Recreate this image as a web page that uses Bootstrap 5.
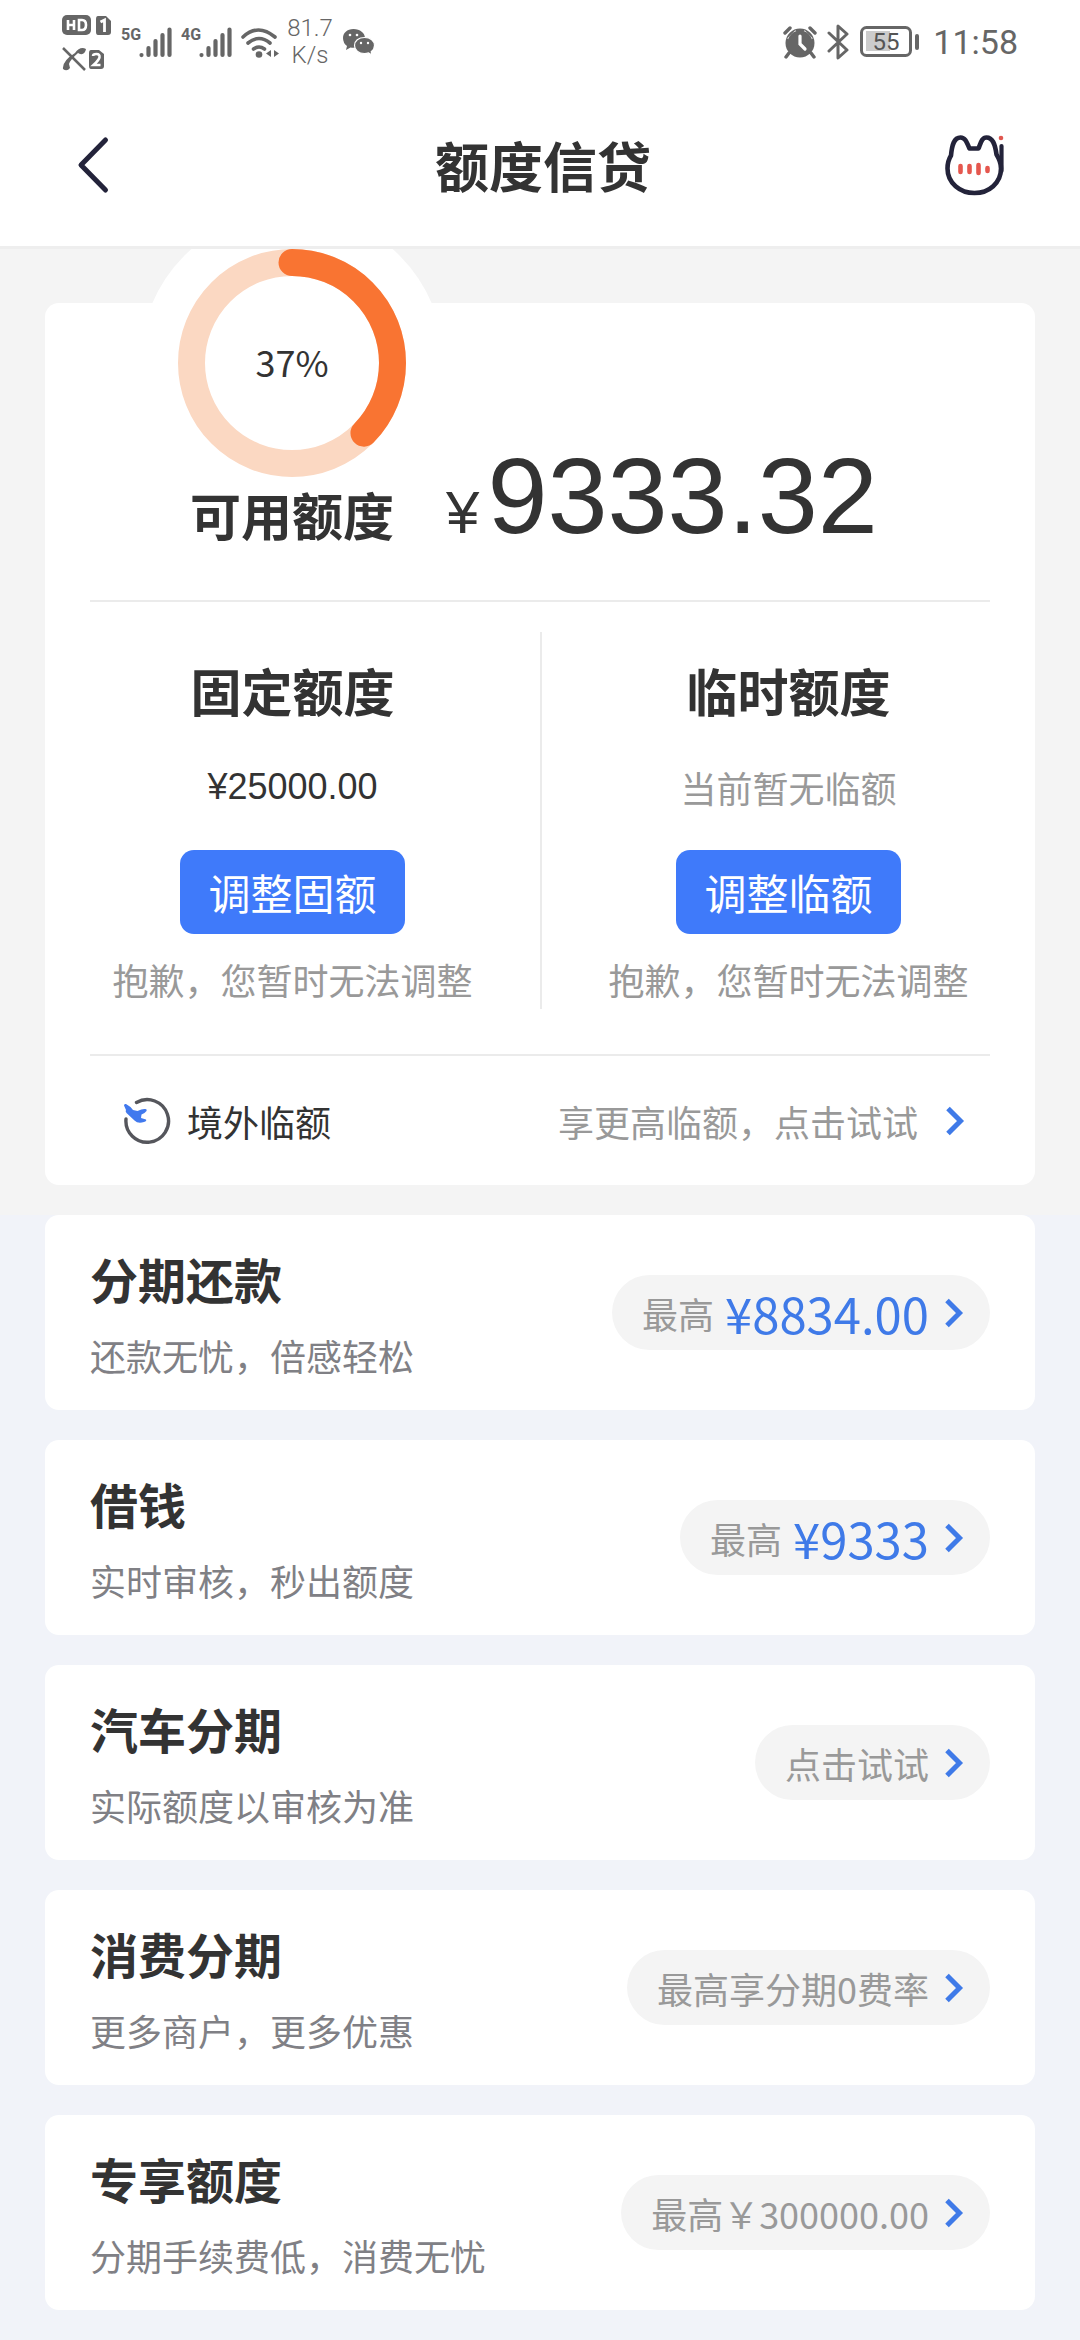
<!DOCTYPE html>
<html lang="zh-CN">
<head>
<meta charset="utf-8">
<meta name="viewport" content="width=device-width, initial-scale=1">
<title>额度信贷</title>
<link href="https://cdn.jsdelivr.net/npm/bootstrap@5.3.0/dist/css/bootstrap.min.css" rel="stylesheet">
<style>
  body { font-family: "Noto Sans CJK SC", sans-serif; font-size: 36px; line-height: 54px; color: #333; background: #f1f3f9; }
  a { color: inherit; text-decoration: none; }
  svg { display: block; flex: none; }

  .status-bar { height: 80px; padding: 3px 62px 0 61px; color: #666; font-family: Roboto, sans-serif; }
  .net-speed { width: 48px; margin-left: 6px; font-size: 24px; line-height: 27px; font-weight: 300; text-align: center; }
  .clock { margin-left: 12px; font-size: 34px; line-height: 42px; }

  .app-header { height: 169px; padding: 4px 70px 0 76px; border-bottom: 3px solid #eee; }
  .app-header h1 { font-size: 54px; line-height: 60px; font-weight: 700; }
  .icon-btn { width: 66px; height: 66px; border: 0; padding: 0; background: none; }

  .hero { background: #f4f4f4; padding: 54px 45px 30px; overflow: hidden; }
  .panel { background: #fff; border-radius: 14px; }
  .available { padding: 0 0 56px 133px; gap: 40px; }
  .ring-block { margin-top: -54px; }
  .ring { width: 228px; height: 228px; border-radius: 50%; background: #fff; box-shadow: 0 0 0 38px #fff; margin-bottom: 7px; position: relative; }
  .ring span { position: absolute; inset: 0; line-height: 224px; text-align: center; }
  .limit-title { position: relative; font-size: 51px; line-height: 60px; font-weight: 700; margin: 0; }
  .amount { font-family: "Liberation Sans", sans-serif; font-size: 108px; line-height: 96px; white-space: nowrap; }
  .amount small { font-size: 60px; line-height: 60px; margin-right: 8px; }
  .rule { height: 2px; margin: 0 45px; background: #ebebeb; }

  .limits { margin: 30px 0 45px; }
  .limit-col { padding-top: 28px; padding-bottom: 3px; }
  .limit-col + .limit-col { border-left: 2px solid #ebebeb; }
  .limit-value { margin-top: 40px; }
  .latin { font-family: "Liberation Sans", sans-serif; }
  .muted { color: #999; }
  .btn-adjust { --bs-btn-color: #fff; --bs-btn-bg: #3f7afa; --bs-btn-hover-color: #fff; --bs-btn-hover-bg: #3069e6; --bs-btn-active-color: #fff; --bs-btn-active-bg: #3069e6;
    width: 225px; height: 84px; margin: 36px 0 18px; padding: 0; border: 0; border-radius: 14px; font-size: 42px; line-height: 84px; }
  .abroad { height: 129px; padding: 0 70px 0 78px; }
  .abroad-name { gap: 16px; }
  .abroad-more { gap: 27px; }

  .products { padding: 0 45px 30px; gap: 30px; }
  .product { padding: 28px 45px; }
  .product h2 { font-size: 48px; line-height: 60px; font-weight: 700; margin: 5px 0 20px; }
  .product p { margin: 0; color: #808085; }
  .pill { height: 75px; padding: 0 26px 0 30px; gap: 15px; background: #f4f4f4; color: #999; white-space: nowrap; }
  .pill-sum { font-size: 49px; color: #3f7ae8; margin-left: -4px; }
</style>
</head>
<body>
<svg width="0" height="0" class="position-absolute" aria-hidden="true">
  <symbol id="chev" viewBox="0 0 20 30"><path d="M3 2.500 15.500 15 3 27.500" fill="none" stroke="#3f7ae8" stroke-width="5"/></symbol>
  <symbol id="bars" viewBox="0 0 33 31"><path d="M2.500 28v.1M9.500 21v7M16.500 14v14M23.500 8v20M30.500 2.500V28" fill="none" stroke="#666" stroke-width="4.200" stroke-linecap="round"/></symbol>
</svg>

<header class="bg-white">
  <div class="status-bar d-flex align-items-center justify-content-between">
    <div class="d-flex align-items-center">
      <svg width="51" height="58" viewBox="0 0 51 58" fill="#666">
        <rect x="1" y="2" width="29" height="20" rx="5"/>
        <path d="M7 7v10M13 7v10M7 12h6M18 7v10h3q4 0 4-5t-4-5z" fill="none" stroke="#fff" stroke-width="2.600"/>
        <path d="M37 3h8l5 5v11q0 3-3 3H37q-2 0-2-3V6q0-3 2-3z"/>
        <path d="M39.500 9l4-2v12" fill="none" stroke="#fff" stroke-width="2.800"/>
        <path d="M2 35 24 57" stroke="#666" stroke-width="2.500"/>
        <path d="M14 40q5-7 11-4-1 6-6 5l-2-1Q9 47 8 51l1 4q-3 4-7 1Q1 48 14 40z"/>
        <path d="M30 37h8l5 4v12q0 3-3 3H30q-2 0-2-3V40q0-3 2-3z"/>
        <path d="M32 43q0-2 3.500-2t3 3.500q-1 3-6 7.500h7" fill="none" stroke="#fff" stroke-width="2.500"/>
      </svg>
      <svg class="ms-2" width="52" height="34" viewBox="0 0 52 34"><text x="1" y="15" font-family="Roboto" font-weight="700" font-size="16" fill="#666">5G</text><use href="#bars" x="19" y="2" width="33" height="31"/></svg>
      <svg class="ms-2" width="52" height="34" viewBox="0 0 52 34"><text x="1" y="15" font-family="Roboto" font-weight="700" font-size="16" fill="#666">4G</text><use href="#bars" x="19" y="2" width="33" height="31"/></svg>
      <svg class="ms-2" width="40" height="34" viewBox="0 0 40 34">
        <path d="M3 12q15-14 32 0M8 18q11-9 22 0M13.500 24q5.500-4 11 0" fill="none" stroke="#666" stroke-width="3.600" stroke-linecap="round"/>
        <circle cx="19" cy="29.500" r="3.300" fill="#666"/><path d="M31 25v7l-5-3.500zM34 25v7l5-3.500z" fill="#666"/>
      </svg>
      <div class="net-speed">81.7 K/s</div>
      <svg class="ms-2" width="34" height="28" viewBox="0 0 34 28">
        <path d="M11.500 1C5 1 1 5 1 10q0 5 4 8l-1 4 4.500-2.500q6 1 10-2T23 10C23 5 18 1 11.500 1z" fill="#666"/>
        <path d="M22.500 9.500c-6 0-10 3.500-10 8s4 8 10 8q2 0 4-.6l3.500 2-.8-3.200q3.300-2.500 3.300-6.200c0-4.500-4-8-10-8z" fill="#666" stroke="#fff" stroke-width="1.200"/>
        <g fill="#fff"><circle cx="8" cy="7" r="1.300"/><circle cx="15" cy="7" r="1.300"/><circle cx="19" cy="15" r="1.200"/><circle cx="26" cy="15" r="1.200"/></g>
      </svg>
    </div>
    <div class="d-flex align-items-center">
      <svg width="34" height="34" viewBox="0 0 34 34">
        <circle cx="17" cy="18" r="14.500" fill="#666"/>
        <path d="M5 14 13 6M29 14 21 6" stroke="#fff" stroke-width="2"/>
        <path d="M2 8l5-5M32 8l-5-5M6 28l-3 4M28 28l3 4" stroke="#666" stroke-width="3.400" stroke-linecap="round"/>
        <circle cx="17" cy="18" r="12.500" fill="#666"/>
        <path d="M17 11v8l5 5" fill="none" stroke="#fff" stroke-width="3.200" stroke-linecap="round"/>
      </svg>
      <svg class="ms-2" width="26" height="36" viewBox="0 0 26 36"><path d="M4 9l18 17-9 8V2l9 8L4 27" fill="none" stroke="#666" stroke-width="3" stroke-linejoin="round" stroke-linecap="round"/></svg>
      <svg class="ms-2" width="62" height="34" viewBox="0 0 62 34">
        <rect x="7" y="6" width="24" height="20" fill="#ccc"/>
        <rect x="2.500" y="2.500" width="49" height="28" rx="5" fill="none" stroke="#666" stroke-width="3"/>
        <rect x="56" y="9" width="4" height="16" rx="2" fill="#666"/>
        <text x="27" y="25" text-anchor="middle" font-family="Roboto" font-size="24" fill="#555">55</text>
      </svg>
      <div class="clock">11:58</div>
    </div>
  </div>
  <nav class="app-header d-flex align-items-center justify-content-between" aria-label="页面导航">
    <button type="button" class="icon-btn" aria-label="返回">
      <svg width="34" height="60" viewBox="0 0 34 60"><path d="M29.500 5 5 30 29.500 55" fill="none" stroke="#23233a" stroke-width="5" stroke-linecap="round" stroke-linejoin="round"/></svg>
    </button>
    <h1 class="m-0">额度信贷</h1>
    <button type="button" class="icon-btn" aria-label="客服">
      <svg width="66" height="66" viewBox="0 0 66 66">
        <path d="M25.500 16.500h9C37 10 38 5.500 42.500 5.500c6 0 8.500 6 10 17 2.500 4 4.500 8.500 4.500 14C57 51 45 61 30.500 61S3.500 51 3.500 36.500c0-5 1-9 3.500-13C8 12.500 10 5.500 16.500 5.500c4.500 0 6 4 9 11z" fill="none" stroke="#23233a" stroke-width="4.600" stroke-linejoin="round"/>
        <path d="M57.500 14v25" stroke="#23233a" stroke-width="4.200" stroke-linecap="round"/>
        <circle cx="57" cy="6" r="2.300" fill="#e0574f"/>
        <path d="M16.500 34v6M25.500 34v6M34.500 33v8M43.500 36v3" stroke="#e5574e" stroke-width="4.600" stroke-linecap="round"/>
      </svg>
    </button>
  </nav>
</header>

<main>
  <section class="hero">
    <div class="panel">
      <div class="available d-flex align-items-end">
        <div class="ring-block text-center">
          <div class="ring">
            <svg width="228" height="228" viewBox="0 0 228 228">
              <circle cx="114" cy="114" r="100.500" fill="none" stroke="#fbd8c2" stroke-width="27"/>
              <circle cx="114" cy="114" r="100.500" fill="none" stroke="#f97432" stroke-width="27" stroke-linecap="round" pathLength="100" stroke-dasharray="37.300 100" transform="rotate(-90 114 114)"/>
            </svg>
            <span>37%</span>
          </div>
          <h2 class="limit-title">可用额度</h2>
        </div>
        <div class="amount"><small>¥</small>9333.32</div>
      </div>
      <div class="rule"></div>
      <div class="limits row g-0 text-center">
        <div class="limit-col col-6">
          <h2 class="limit-title">固定额度</h2>
          <div class="limit-value latin">¥25000.00</div>
          <button type="button" class="btn btn-adjust">调整固额</button>
          <div class="muted">抱歉，您暂时无法调整</div>
        </div>
        <div class="limit-col col-6">
          <h2 class="limit-title">临时额度</h2>
          <div class="limit-value muted">当前暂无临额</div>
          <button type="button" class="btn btn-adjust">调整临额</button>
          <div class="muted">抱歉，您暂时无法调整</div>
        </div>
      </div>
      <div class="rule"></div>
      <a href="#" class="abroad d-flex align-items-center justify-content-between">
        <span class="abroad-name d-flex align-items-center">
          <svg width="48" height="48" viewBox="0 0 48 48">
            <path d="M13.500 5.500A21.300 21.300 0 1 1 3 22" fill="none" stroke="#55565c" stroke-width="3.400" stroke-linecap="round"/>
            <path d="M1 8.500q0-2 2-1.500 4 2 7 6l4.500 1q5-2.500 8-2 2 .5 1 2-1.500 2-5 3.500l-.5 3.500 5 1.500q1 1.500-2 2.500-6 2-9.500-1.500L3.500 16q-1.500-2-.5-3z" fill="#4179ee"/>
          </svg>
          <span>境外临额</span>
        </span>
        <span class="abroad-more muted d-flex align-items-center">享更高临额，点击试试<svg width="20" height="30"><use href="#chev"/></svg></span>
      </a>
    </div>
  </section>

  <section class="products d-flex flex-column">
    <a href="#" class="panel product d-flex align-items-center justify-content-between">
      <div><h2>分期还款</h2><p>还款无忧，倍感轻松</p></div>
      <div class="pill rounded-pill d-flex align-items-center"><span>最高</span><span class="pill-sum">¥8834.00</span><svg width="20" height="30"><use href="#chev"/></svg></div>
    </a>
    <a href="#" class="panel product d-flex align-items-center justify-content-between">
      <div><h2>借钱</h2><p>实时审核，秒出额度</p></div>
      <div class="pill rounded-pill d-flex align-items-center"><span>最高</span><span class="pill-sum">¥9333</span><svg width="20" height="30"><use href="#chev"/></svg></div>
    </a>
    <a href="#" class="panel product d-flex align-items-center justify-content-between">
      <div><h2>汽车分期</h2><p>实际额度以审核为准</p></div>
      <div class="pill rounded-pill d-flex align-items-center"><span>点击试试</span><svg width="20" height="30"><use href="#chev"/></svg></div>
    </a>
    <a href="#" class="panel product d-flex align-items-center justify-content-between">
      <div><h2>消费分期</h2><p>更多商户，更多优惠</p></div>
      <div class="pill rounded-pill d-flex align-items-center"><span>最高享分期0费率</span><svg width="20" height="30"><use href="#chev"/></svg></div>
    </a>
    <a href="#" class="panel product d-flex align-items-center justify-content-between">
      <div><h2>专享额度</h2><p>分期手续费低，消费无忧</p></div>
      <div class="pill rounded-pill d-flex align-items-center"><span>最高￥300000.00</span><svg width="20" height="30"><use href="#chev"/></svg></div>
    </a>
  </section>
</main>
<script src="https://cdn.jsdelivr.net/npm/bootstrap@5.3.0/dist/js/bootstrap.bundle.min.js"></script>
</body>
</html>
